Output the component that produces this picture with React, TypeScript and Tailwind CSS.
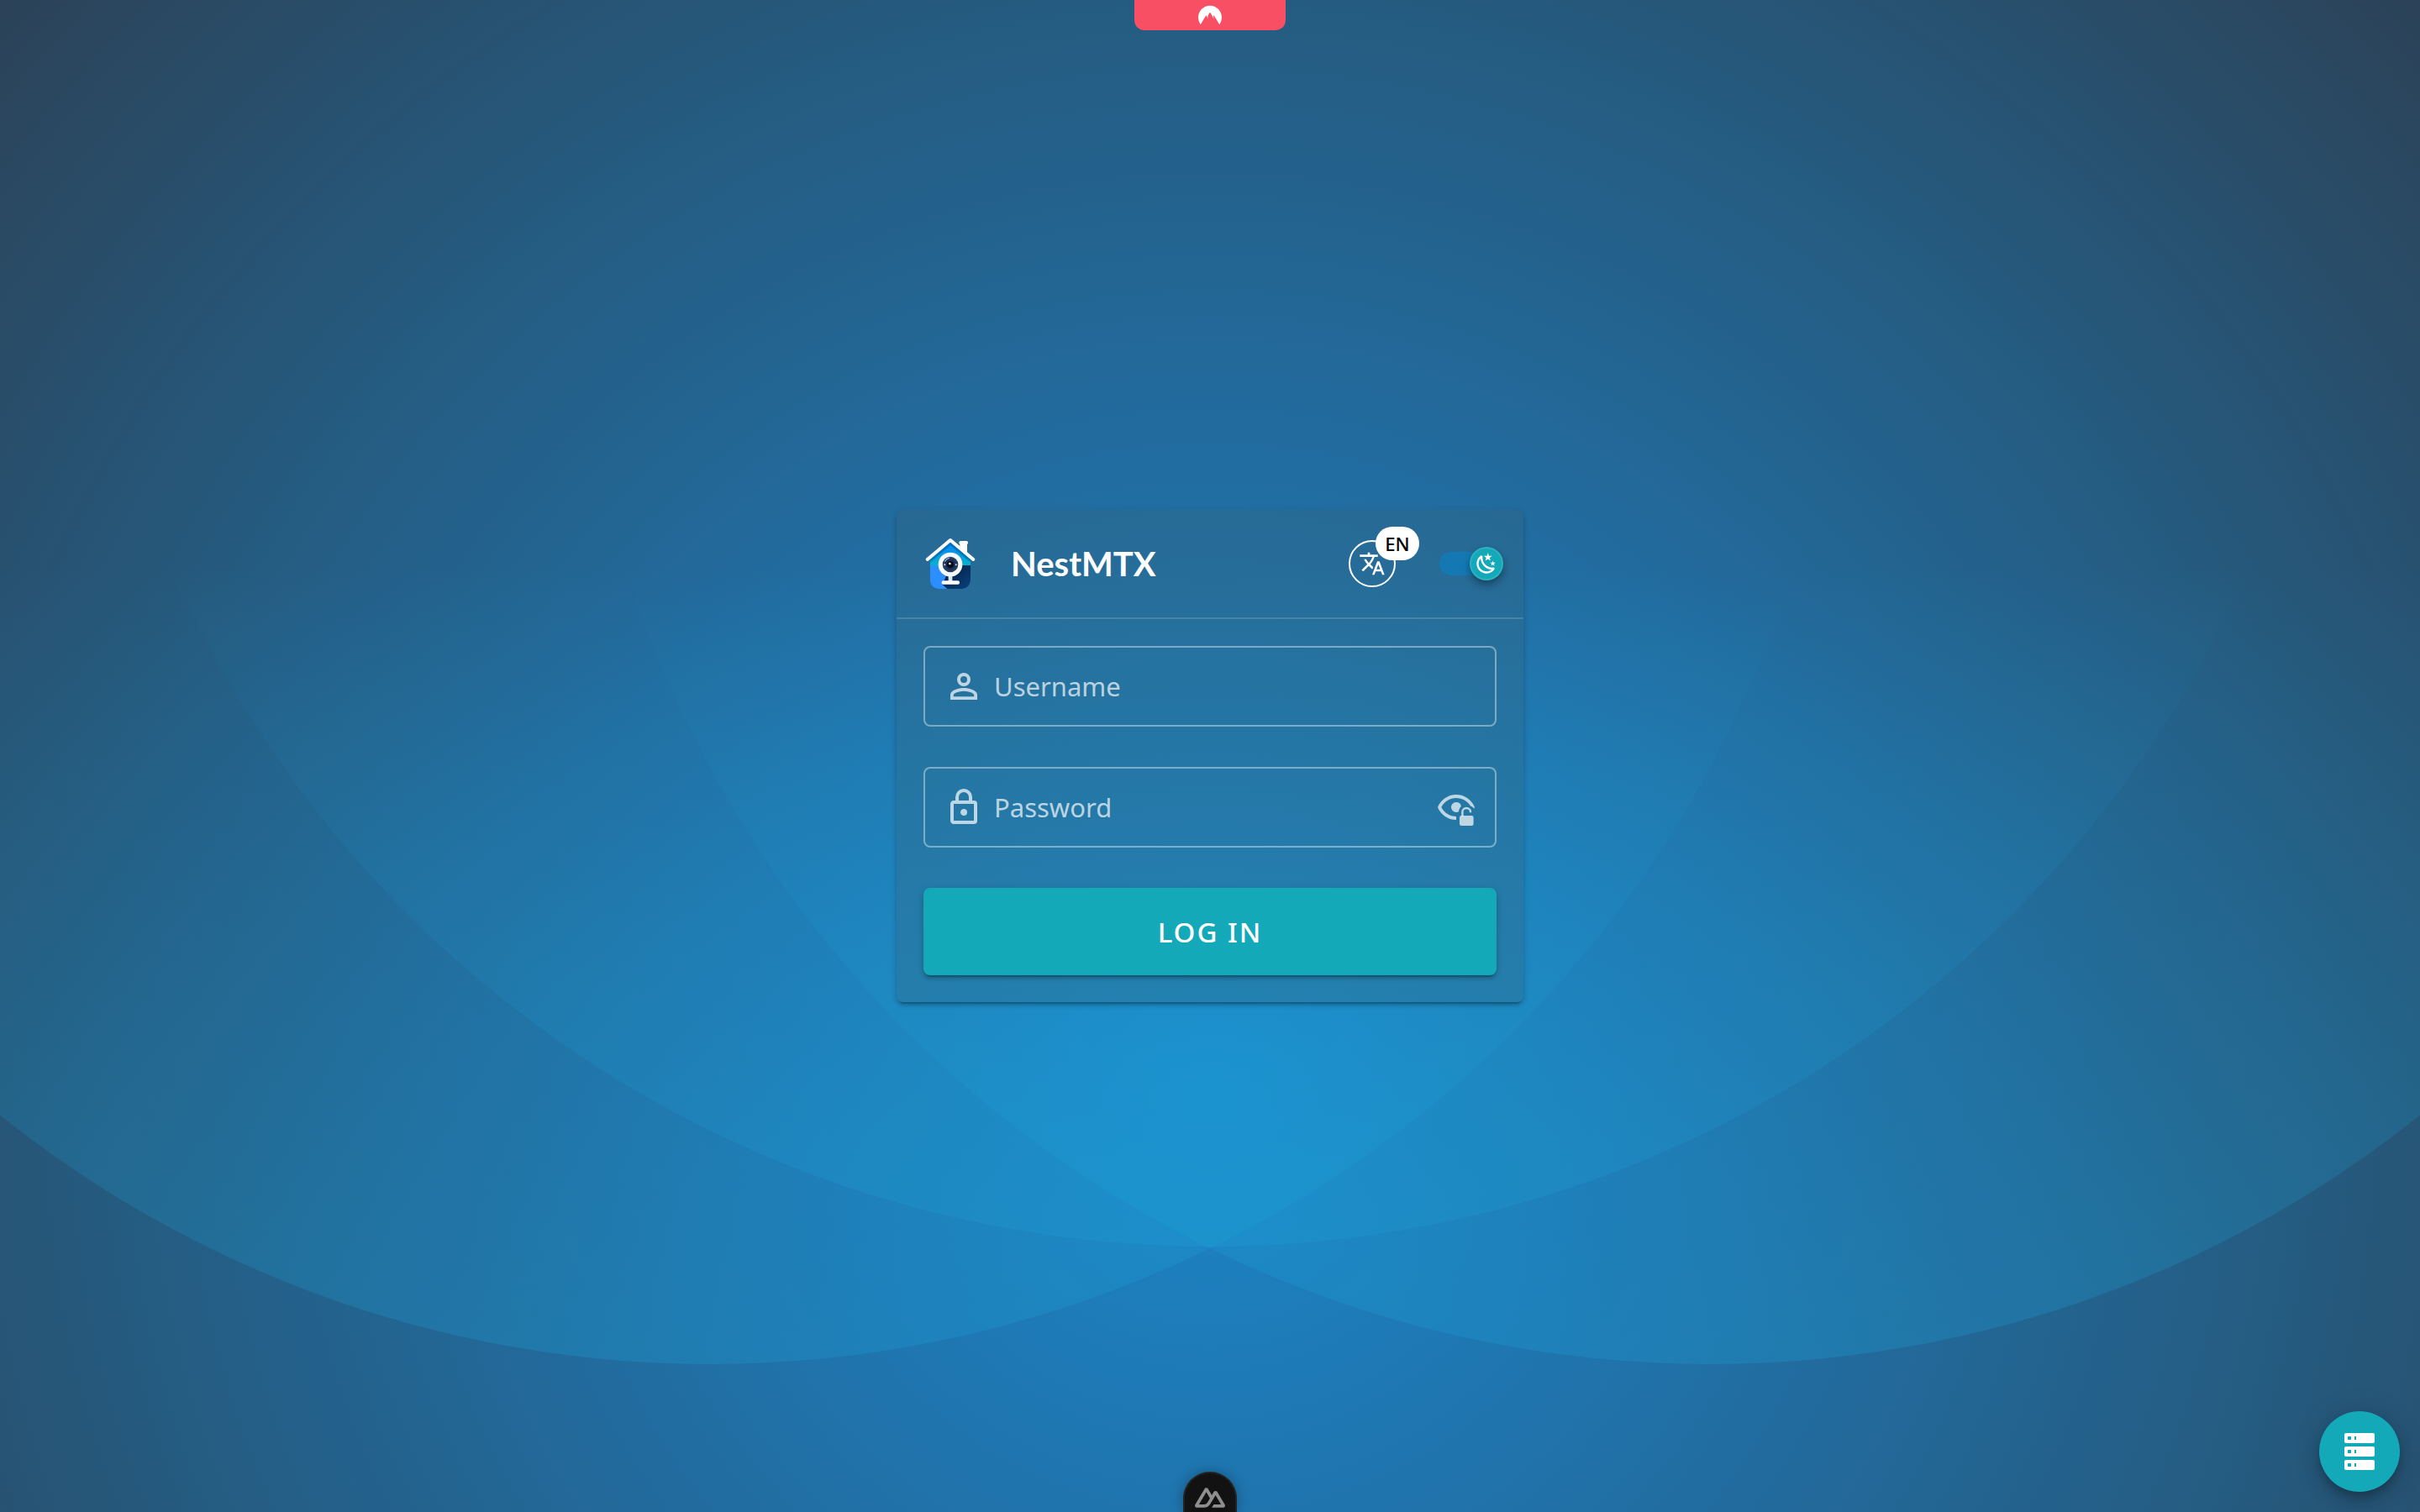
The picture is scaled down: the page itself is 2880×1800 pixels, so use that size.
import { useState, type ReactNode } from "react";
import { SiNordvpn } from "react-icons/si";

const PATHS = {
  account:
    "M12,4A4,4 0 0,1 16,8A4,4 0 0,1 12,12A4,4 0 0,1 8,8A4,4 0 0,1 12,4M12,6A2,2 0 0,0 10,8A2,2 0 0,0 12,10A2,2 0 0,0 14,8A2,2 0 0,0 12,6M12,13C14.67,13 20,14.33 20,17V20H4V17C4,14.33 9.33,13 12,13M12,14.9C9.03,14.9 5.9,16.36 5.9,17V18.1H18.1V17C18.1,16.36 14.97,14.9 12,14.9Z",
  lock: "M12,17C10.89,17 10,16.1 10,15C10,13.89 10.89,13 12,13A2,2 0 0,1 14,15A2,2 0 0,1 12,17M18,20V10H6V20H18M18,8A2,2 0 0,1 20,10V20A2,2 0 0,1 18,22H6C4.89,22 4,21.1 4,20V10C4,8.89 4.89,8 6,8H7V6A5,5 0 0,1 12,1A5,5 0 0,1 17,6V8H18M12,3A3,3 0 0,0 9,6V8H15V6A3,3 0 0,0 12,3Z",
  translate:
    "M12.87,15.07L10.33,12.56L10.36,12.53C12.1,10.59 13.34,8.36 14.07,6H17V4H10V2H8V4H1V6H12.17C11.5,7.92 10.44,9.75 9,11.35C8.07,10.32 7.3,9.19 6.69,8H4.69C5.42,9.63 6.42,11.17 7.67,12.56L2.58,17.58L4,19L9,14L12.11,17.11L12.87,15.07M18.5,10H16.5L12,22H14L15.12,19H19.87L21,22H23L18.5,10M15.88,17L17.5,12.67L19.12,17H15.88Z",
  night:
    "M17.75,4.09L15.22,6.03L16.13,9.09L13.5,7.28L10.87,9.09L11.78,6.03L9.25,4.09L12.44,4L13.5,1L14.56,4L17.75,4.09M21.25,11L19.61,12.25L20.2,14.23L18.5,13.06L16.8,14.23L17.39,12.25L15.75,11L17.81,10.95L18.5,9L19.19,10.95L21.25,11M18.97,15.95C19.8,15.87 20.69,17.05 20.16,17.8C19.84,18.25 19.5,18.67 19.08,19.07C15.17,23 8.84,23 4.94,19.07C1.03,15.17 1.03,8.83 4.94,4.93C5.34,4.53 5.76,4.17 6.21,3.85C6.96,3.32 8.14,4.21 8.06,5.04C7.79,7.9 8.75,10.87 10.95,13.06C13.14,15.26 16.1,16.22 18.97,15.95M17.33,17.97C14.5,17.81 11.7,16.64 9.53,14.5C7.36,12.31 6.2,9.5 6.04,6.68C3.23,9.82 3.34,14.64 6.35,17.66C9.37,20.67 14.19,20.78 17.33,17.97Z",
  server:
    "M4,1H20A1,1 0 0,1 21,2V6A1,1 0 0,1 20,7H4A1,1 0 0,1 3,6V2A1,1 0 0,1 4,1M4,9H20A1,1 0 0,1 21,10V14A1,1 0 0,1 20,15H4A1,1 0 0,1 3,14V10A1,1 0 0,1 4,9M4,17H20A1,1 0 0,1 21,18V22A1,1 0 0,1 20,23H4A1,1 0 0,1 3,22V18A1,1 0 0,1 4,17M9,5H10V3H9V5M9,13H10V11H9V13M9,21H10V19H9V21M5,3V5H7V3H5M5,11V13H7V11H5M5,19V21H7V19H5Z",
  nuxt: "M13.4642 19.8295h8.9218c.2834 0 .5618-.0723.8072-.2098a1.5899 1.5899 0 0 0 .5908-.5732 1.5293 1.5293 0 0 0 .216-.7828 1.529 1.529 0 0 0-.2167-.7828L17.7916 7.4142a1.5904 1.5904 0 0 0-.5907-.573 1.6524 1.6524 0 0 0-.807-.2099c-.2833 0-.5616.0724-.807.2098a1.5904 1.5904 0 0 0-.5907.5731L13.4642 9.99l-2.9954-5.0366a1.5913 1.5913 0 0 0-.591-.573 1.6533 1.6533 0 0 0-.8071-.2098c-.2834 0-.5617.0723-.8072.2097a1.5913 1.5913 0 0 0-.591.573L.2168 17.4808A1.5292 1.5292 0 0 0 0 18.2635c-.0001.2749.0744.545.216.783a1.59 1.59 0 0 0 .5908.5732c.2454.1375.5238.2098.8072.2098h5.6003c2.219 0 3.8554-.9454 4.9813-2.7899l2.7337-4.5922L16.3935 9.99l4.3944 7.382h-5.8586ZM7.123 17.3694l-3.9083-.0009 5.8586-9.8421 2.9232 4.921-1.9572 3.2892c-.7478 1.1967-1.5972 1.6328-2.9163 1.6328z",
};

function Icon({ path, className }: { path: string; className: string }) {
  return (
    <svg viewBox="0 0 24 24" className={className} fill="currentColor" aria-hidden="true">
      <path d={path} />
    </svg>
  );
}

function EyeLockOpen({ className }: { className: string }) {
  return (
    <svg viewBox="0 0 24 24" className={className} fill="currentColor" aria-hidden="true">
      <path d="M12,17.5V19.5C7,19.5 2.73,16.39 1,12C2.73,7.61 7,4.5 12,4.5C17,4.5 21.27,7.61 23,12C22.9,12.3 22.8,12.5 22.7,12.8C22.1,12.1 21.4,11.5 20.5,11.2C18.7,8.3 15.5,6.5 12,6.5C8.24,6.5 4.83,8.64 3.18,12C4.83,15.36 8.24,17.5 12,17.5Z" />
      <path d="M12,9A3,3 0 0,1 14.95,11.5C14.1,12.3 13.6,13.3 13.5,14.6A3,3 0 1,1 12,9Z" />
      <rect x="14" y="17" width="8.3" height="6" rx="1.1" />
      <path d="M15.7,17.4V14.7A2.4,2.2 0 0,1 20.5,14.7V15.1" fill="none" stroke="currentColor" strokeWidth="1.2" />
    </svg>
  );
}

function Logo() {
  return (
    <svg viewBox="27 57 192 192" className="size-16" aria-hidden="true">
      <defs>
        <linearGradient id="roof" x1="0" y1="0" x2="0" y2="1">
          <stop offset="0" stopColor="#0a84ff" />
          <stop offset="0.5" stopColor="#0497e6" />
          <stop offset="1" stopColor="#06b4cc" />
        </linearGradient>
        <linearGradient id="night" x1="0" y1="0" x2="1" y2="1">
          <stop offset="0" stopColor="#021c40" />
          <stop offset="1" stopColor="#0a417c" />
        </linearGradient>
        <radialGradient id="lens">
          <stop offset="0" stopColor="#0b1d38" />
          <stop offset="0.55" stopColor="#1a2f4f" />
          <stop offset="1" stopColor="#2a4468" />
        </radialGradient>
        <clipPath id="house">
          <path d="M51 130L123 70L195 130V213A30 30 0 0 1 165 243H81A30 30 0 0 1 51 213Z" />
        </clipPath>
      </defs>
      <path d="M157 84Q154 83 154 78Q154 72 159 72H181Q186 72 186 78Q186 83 183 84V124L157 102Z" fill="#fff" />
      <g clipPath="url(#house)">
        <rect x="51" y="68" width="144" height="92" fill="url(#roof)" />
        <rect x="51" y="159" width="144" height="84" fill="#2b8fff" />
        <path d="M95 228L123 159H195V243H112Z" fill="url(#night)" />
        <path d="M51 143L123 82L195 143" fill="none" stroke="#04589c" strokeOpacity="0.55" strokeWidth="9" />
      </g>
      <path d="M41 138L123 69L205 138" fill="none" stroke="#fff" strokeWidth="12" strokeLinecap="round" strokeLinejoin="round" />
      <rect x="116" y="190" width="14" height="30" fill="#dfe9f6" />
      <rect x="92" y="214" width="64" height="13" rx="6" fill="#fff" />
      <circle cx="123" cy="156" r="43" fill="#f7faff" />
      <circle cx="123" cy="156" r="28" fill="url(#lens)" />
      <circle cx="123" cy="156" r="12" fill="#050d1d" />
      <path d="M104 144A22 22 0 0 1 118 133" fill="none" stroke="#8fb0d6" strokeWidth="4" strokeLinecap="round" />
      <circle cx="121" cy="153" r="4" fill="#fff" />
      <circle cx="103" cy="157" r="3" fill="#d5e4f5" />
      <circle cx="143" cy="157" r="3" fill="#d5e4f5" />
    </svg>
  );
}

function Backdrop() {
  return (
    <svg
      viewBox="0 0 2880 1800"
      preserveAspectRatio="xMidYMid slice"
      className="absolute inset-0 -z-10 size-full"
      aria-hidden="true"
    >
      <defs>
        <radialGradient id="base" gradientUnits="userSpaceOnUse" cx="1440" cy="1300" r="1950">
          <stop offset="0" stopColor="#1b85c8" />
          <stop offset="0.35" stopColor="#216fa5" />
          <stop offset="0.67" stopColor="#255b80" />
          <stop offset="1" stopColor="#2c4257" />
        </radialGradient>
        <linearGradient id="glow" gradientUnits="userSpaceOnUse" x1="0" y1="670" x2="0" y2="1600">
          <stop offset="0" stopColor="#1ca4d8" stopOpacity="0" />
          <stop offset="1" stopColor="#1ca4d8" stopOpacity="0.26" />
        </linearGradient>
      </defs>
      <rect width="2880" height="1800" fill="url(#base)" />
      <circle cx="845" cy="272" r="1352" fill="url(#glow)" />
      <circle cx="2035" cy="272" r="1352" fill="url(#glow)" />
      <circle cx="1440" cy="134" r="1350" fill="url(#glow)" />
    </svg>
  );
}

type FieldProps = {
  id: string;
  label: string;
  type: string;
  icon: string;
  children?: ReactNode;
};

function Field({ id, label, type, icon, children }: FieldProps) {
  return (
    <div className="flex h-24 items-center rounded-lg border-2 border-white/40 px-[22px] text-white/70">
      <label htmlFor={id} className="shrink-0">
        <Icon path={PATHS[icon as keyof typeof PATHS]} className="size-12" />
      </label>
      <input
        id={id}
        type={type}
        aria-label={label}
        placeholder={label}
        className="ml-3 min-w-0 flex-1 bg-transparent text-[31px] leading-10 text-white outline-none placeholder:text-white/70"
      />
      {children}
    </div>
  );
}

export default function App() {
  const [dark, setDark] = useState(true);
  const [visible, setVisible] = useState(false);

  return (
    <div className="relative isolate flex min-h-screen flex-col items-center justify-center overflow-hidden font-['Noto_Sans',sans-serif]">
      <Backdrop />

      <div className="absolute top-0 left-1/2 flex h-9 w-[180px] -translate-x-1/2 items-center justify-center rounded-b-xl bg-[#f84f64] text-white">
        <SiNordvpn className="size-7" />
      </div>

      <main className="w-full max-w-[746px] rounded-lg bg-[#346477]/30 shadow-[0_6px_2px_-4px_rgba(0,0,0,0.2),0_4px_4px_0_rgba(0,0,0,0.14),0_2px_10px_0_rgba(0,0,0,0.12)]">
        <header className="flex h-[130px] items-center border-b-2 border-white/15 px-8">
          <Logo />
          <h1 className="ml-10 flex-1 font-['Lato',sans-serif] text-[40px] leading-none font-bold text-white">
            NestMTX
          </h1>
          <button
            type="button"
            aria-label="Language"
            className="relative flex size-14 items-center justify-center rounded-full border-2 border-white text-white"
          >
            <Icon path={PATHS.translate} className="size-8" />
            <span className="absolute -top-[18px] left-[30px] flex h-10 w-[52px] items-center justify-center rounded-full bg-white text-[22px] leading-none font-medium text-black">
              EN
            </span>
          </button>
          <label className="relative -mr-1 ml-[52px] flex h-10 w-[72px] cursor-pointer items-center">
            <input
              type="checkbox"
              role="switch"
              aria-label="Dark mode"
              checked={dark}
              onChange={() => setDark(!dark)}
              className="peer h-7 w-full appearance-none rounded-full bg-[#1479b3]"
            />
            <span className="absolute left-0 flex size-10 items-center justify-center rounded-full border-2 border-white/10 bg-[#14a9b9] text-white shadow-[0_4px_8px_-2px_rgba(0,0,0,0.3),0_6px_12px_0_rgba(0,0,0,0.2)] peer-checked:left-9">
              <Icon path={PATHS.night} className="size-7 shrink-0" />
            </span>
          </label>
        </header>

        <form className="flex flex-col gap-12 p-8" onSubmit={(e) => e.preventDefault()}>
          <Field id="username" label="Username" type="text" icon="account" />
          <Field id="password" label="Password" type={visible ? "text" : "password"} icon="lock">
            <button type="button" aria-label="Show password" onClick={() => setVisible(!visible)}>
              <EyeLockOpen className="size-12" />
            </button>
          </Field>
          <button
            type="submit"
            className="h-[104px] rounded-lg bg-[#14a9b9] text-[33px] leading-none font-medium tracking-[2px] text-white shadow-[0_6px_2px_-4px_rgba(0,0,0,0.2),0_4px_4px_0_rgba(0,0,0,0.14),0_2px_10px_0_rgba(0,0,0,0.12)]"
          >
            LOG IN
          </button>
        </form>
      </main>

      <button
        type="button"
        aria-label="Developer tools"
        className="absolute bottom-0 left-1/2 flex h-12 w-16 -translate-x-1/2 items-center justify-center rounded-t-full border-2 border-b-0 border-[#222222] bg-[#121212] pt-3 text-[#8f8f8f] shadow-[0_0_16px_rgba(0,0,0,0.3)]"
      >
        <Icon path={PATHS.nuxt} className="size-9" />
      </button>

      <button
        type="button"
        aria-label="Servers"
        className="absolute right-6 bottom-6 flex size-24 items-center justify-center rounded-full bg-[#14a9b9] text-white shadow-[0_6px_10px_-2px_rgba(0,0,0,0.2),0_12px_20px_0_rgba(0,0,0,0.14),0_2px_36px_0_rgba(0,0,0,0.12)]"
      >
        <Icon path={PATHS.server} className="size-12" />
      </button>
    </div>
  );
}
